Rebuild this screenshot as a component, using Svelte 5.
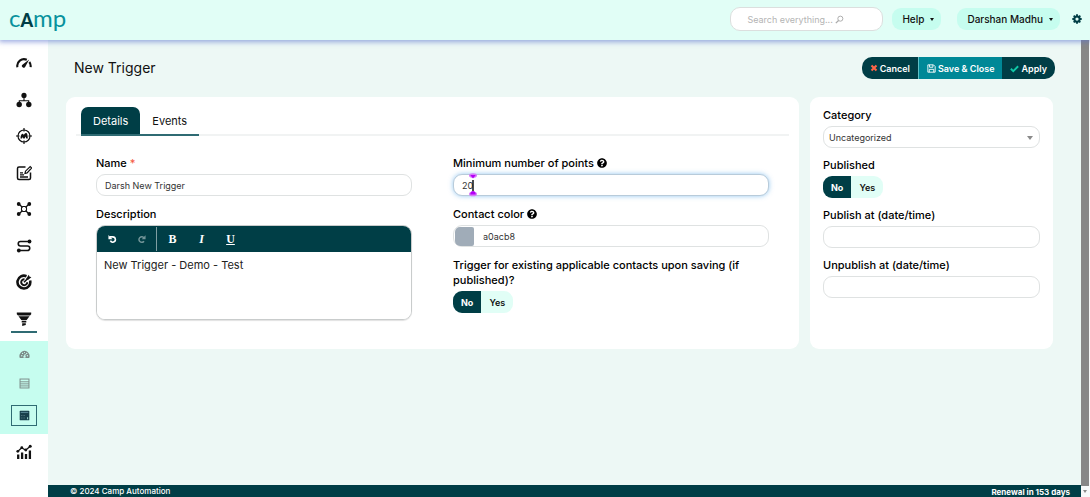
<script>
  const navIcons = ['gauge', 'sitemap', 'segment', 'form', 'network', 'route', 'target', 'funnel'];
  const labels = {
    gauge: 'Dashboard', sitemap: 'Components', segment: 'Segments', form: 'Forms',
    network: 'Channels', route: 'Journeys', target: 'Goals', funnel: 'Points',
    dash: 'Point dashboard', calc: 'Manage actions', calcSolid: 'Manage triggers', chart: 'Reports'
  };
  let name = $state('Darsh New Trigger');
  let points = $state('20');
  let color = $state('a0acb8');
  let description = $state('New Trigger - Demo - Test');
  let existing = $state('no');
  let published = $state('no');
</script>

{#snippet icon(kind)}
  <svg class="icon" viewBox="0 0 16 16" fill="none" stroke="currentColor" stroke-width="1.5" aria-hidden="true">
    {#if kind === 'gauge'}
      <path d="M1.4 12.2a6.7 6.7 0 0 1 9.4-7.4M13.3 7a6.7 6.7 0 0 1 1.3 5.2" stroke-width="2.1" />
      <path d="M13.2 4.5 9.4 11.6a1.8 1.8 0 1 1-2.7-2.2z" fill="currentColor" stroke="none" />
    {:else if kind === 'sitemap'}
      <path d="M8 5v4M3.3 11V8.700h9.400V11" stroke-width="1.1" />
      <g fill="currentColor" stroke="none"><circle cx="8" cy="3.400" r="2.600" /><circle cx="3.200" cy="12.500" r="2.700" /><circle cx="12.800" cy="12.500" r="2.700" /></g>
    {:else if kind === 'segment'}
      <circle cx="8" cy="8" r="6" stroke-width="1.2" />
      <path d="M8 0v3.500M8 12.500v3.500M0 8h3.500M12.500 8h3.500" stroke-width="1.2" />
      <path d="M4.500 10.500c0-3 1-4.700 2.200-4.700.8 0 1 .8 1 1.500C8.200 6 9 5 10 5c1.200 0 1.800 2 1.800 5.500h-1.500l-.8-2-.8 2H7.300l-.6-1.500-.7 1.500z" fill="currentColor" stroke="none" />
    {:else if kind === 'form'}
      <path d="M9.500 2H3a1.500 1.500 0 0 0-1.500 1.500v9.500A1.500 1.500 0 0 0 3 14.500h10a1.500 1.500 0 0 0 1.500-1.500V7.500" />
      <path d="M4 7.800h3M4 9.800h4M4 12h8" stroke-width="1.3" />
      <path d="m9 8.500.5-2.300 4.700-4.700 1.500 1.500-4.600 4.900z" stroke-width="1.2" />
    {:else if kind === 'network'}
      <path d="m3 3 3.500 3.500M13 3 9.500 6.500M3 13l3.500-3.500M13 13 9.500 9.500" stroke-width="1.3" />
      <rect x="5.500" y="5.500" width="5" height="5" rx="1.500" stroke-width="1.1" />
      <g fill="currentColor" stroke="none"><circle cx="2.700" cy="3" r="1.900" /><circle cx="13.300" cy="3" r="1.900" /><circle cx="2.700" cy="13" r="1.900" /><circle cx="13.300" cy="13" r="1.900" /></g>
    {:else if kind === 'route'}
      <path d="M13 3.500H4.500a2.200 2.200 0 0 0 0 4.500h7a2.200 2.200 0 0 1 0 4.500H3" stroke-width="1.6" />
      <g fill="currentColor" stroke="none"><circle cx="13.500" cy="3.500" r="1.900" /><circle cx="2.800" cy="12.500" r="1.900" /></g>
    {:else if kind === 'target'}
      <path d="M10.500 2.200A6.400 6.400 0 1 0 14.100 6.500" stroke-width="2.6" />
      <path d="M8.500 5.200a3 3 0 1 0 2.700 3" stroke-width="2" />
      <path d="m8 8.300 4-4" stroke-width="1.6" />
      <path d="M10.200 4.700 12.800.8l.6 1.800 2 .6-3.500 2.900z" fill="currentColor" stroke="none" />
    {:else if kind === 'funnel'}
      <path d="M.8 1.500h14.400v1.800L14 4.500H2L.8 3.300zM2.500 5.300h11L10.700 9H5.300zM5.700 9.800h4.600v1.700H5.700zM6.200 12.300h3.600V14l-3.600 1z" fill="currentColor" stroke="none" />
    {:else if kind === 'dash'}
      <path d="M1.200 13A7 7 0 0 1 2 6a7 7 0 0 1 12 0 7 7 0 0 1 .8 7z" fill="currentColor" stroke="none" />
      <g fill="#c6fdef" stroke="none"><circle cx="4" cy="9.800" r="1" /><circle cx="5.200" cy="6.400" r="1" /><circle cx="8" cy="5" r=".8" /><circle cx="11.200" cy="6.500" r="1" /><circle cx="12.200" cy="9.800" r="1" /><circle cx="8" cy="11.200" r="1.700" /></g>
      <path d="m8 11 1.200-4" stroke="#c6fdef" />
    {:else if kind === 'calc'}
      <rect x="1.500" y="1.500" width="13" height="13" stroke-width="1.4" />
      <path d="M1.500 5.500h13M1.500 8.500h13M1.500 11.500h13" stroke-width="1.3" />
    {:else if kind === 'calcSolid'}
      <rect x="1" y="1" width="14" height="14" rx="1" fill="currentColor" stroke="none" />
      <path d="M2.500 3.500h11" stroke="#5a8796" stroke-width="1.5" />
      <path d="M3 8h7M3 11.500h7" stroke="#4d6f7a" stroke-width="1.5" stroke-dasharray="2 1.500" />
      <path d="M12.500 10.500v3" stroke="#9fd6d0" stroke-width="1.5" />
    {:else if kind === 'chart'}
      <path d="M2.200 15v-4.500M6.100 15V8.500M10 15v-5M13.900 15V6.500" stroke-width="2.3" />
      <path d="m1.700 7.500 4-3.800 4 2.500 4.500-4" stroke-width="1.2" />
      <g fill="currentColor" stroke="none"><circle cx="1.800" cy="7.300" r="1.400" /><circle cx="5.800" cy="3.700" r="1.400" /><circle cx="9.800" cy="6" r="1.400" /><circle cx="14.200" cy="2.200" r="1.500" /></g>
    {:else if kind === 'search'}
      <circle cx="9.500" cy="6.500" r="4.500" stroke-width="1.7" /><path d="m6.300 9.700-4.800 4.800" stroke-width="2.2" />
    {:else if kind === 'gear'}
      <circle cx="8" cy="8" r="4.200" stroke-width="3.2" />
      <path d="M8 .5v3M8 12.500v3M.5 8h3M12.500 8h3M2.700 2.700l2 2M11.300 11.300l2 2M13.300 2.700l-2 2M4.700 11.300l-2 2" stroke-width="3" />
    {:else if kind === 'times'}
      <path d="m3 3 10 10M13 3 3 13" stroke-width="4.2" />
    {:else if kind === 'save'}
      <path d="M1.500 1.500h10l3 3v10h-13zM4.500 1.500v4.300h6V1.500M4 14.500V9.500h8v5" stroke-width="1.6" />
    {:else if kind === 'check'}
      <path d="m1.500 8.500 4.300 4.300L14.500 4" stroke-width="3.4" />
    {:else if kind === 'undo'}
      <path d="M3 3.300h5.500a4.700 4.700 0 1 1-4.300 6.700" stroke-width="2.8" /><path d="M.8 0v7.500h7.200z" fill="currentColor" stroke="none" />
    {:else if kind === 'redo'}
      <path d="M12.500 5A5 5 0 1 0 12.500 11" stroke-width="2.6" /><path d="M15.200.5v7H8.300z" fill="currentColor" stroke="none" />
    {/if}
  </svg>
{/snippet}

{#snippet help()}
  <svg class="help" viewBox="0 0 512 512" fill="currentColor" aria-hidden="true"><path d="M504 256c0 136.997-111.043 248-248 248S8 392.997 8 256C8 119.083 119.043 8 256 8s248 111.083 248 248zM262.655 90c-54.497 0-89.255 22.957-116.549 63.758-3.536 5.286-2.353 12.415 2.715 16.258l34.699 26.310c5.205 3.947 12.621 3.008 16.665-2.122 17.864-22.658 30.113-35.797 57.303-35.797 20.429 0 45.698 13.148 45.698 32.958 0 14.976-12.363 22.667-32.534 33.976C247.128 238.528 216 254.941 216 296v4c0 6.627 5.373 12 12 12h56c6.627 0 12-5.373 12-12v-1.333c0-28.462 83.186-29.647 83.186-106.667 0-58.002-60.165-102-116.531-102zM256 338c-25.365 0-46 20.635-46 46 0 25.364 20.635 46 46 46s46-20.636 46-46c0-25.364-20.635-46-46-46z" /></svg>
{/snippet}

{#snippet toggle(group, get, set)}
  <div class="toggle">
    {#each [['no', 'No'], ['yes', 'Yes']] as [value, text]}
      <label class:on={get() === value}>
        <input type="radio" name={group} {value} checked={get() === value} onchange={() => set(value)} />{text}
      </label>
    {/each}
  </div>
{/snippet}

<div class="page">
  <header>
    <a class="logo" href="#home">c<b>A</b>mp</a>
    <div class="search">
      <input type="text" placeholder="Search everything..." aria-label="Search everything" />
      {@render icon('search')}
    </div>
    <button class="pill">Help <span class="caret"></span></button>
    <button class="pill user">Darshan Madhu <span class="caret"></span></button>
    <button class="settings" aria-label="Settings">{@render icon('gear')}</button>
  </header>

  <div class="body">
    <nav>
      <div class="primary">
        {#each navIcons as kind}
          <a href="#{kind}" aria-label={labels[kind]} class:current={kind === 'funnel'}>{@render icon(kind)}</a>
        {/each}
      </div>
      <div class="submenu">
        {#each ['dash', 'calc', 'calcSolid'] as kind}
          <a href="#{kind}" aria-label={labels[kind]} class:active={kind === 'calcSolid'}>{@render icon(kind)}</a>
        {/each}
      </div>
      <a class="chart" href="#chart" aria-label={labels.chart}>{@render icon('chart')}</a>
    </nav>

    <div class="content">
      <main>
        <div class="title">
          <h1>New Trigger</h1>
          <div class="actions">
            <button class="cancel">{@render icon('times')}Cancel</button>
            <button class="save">{@render icon('save')}Save &amp; Close</button>
            <button class="apply">{@render icon('check')}Apply</button>
          </div>
        </div>

        <div class="panels">
          <section class="card details">
            <div class="tabs" role="tablist">
              <button role="tab" aria-selected="true">Details</button>
              <button role="tab" aria-selected="false">Events</button>
            </div>
            <div class="columns">
              <div class="column">
                <div class="field">
                  <label for="name">Name <span class="required">*</span></label>
                  <input id="name" type="text" bind:value={name} />
                </div>
                <div class="field">
                  <label for="description">Description</label>
                  <div class="editor">
                    <div class="toolbar">
                      <button aria-label="Undo">{@render icon('undo')}</button>
                      <button class="off" aria-label="Redo">{@render icon('redo')}</button>
                      <span class="divider"></span>
                      <button class="glyph">B</button>
                      <button class="glyph italic">I</button>
                      <button class="glyph underline">U</button>
                    </div>
                    <textarea id="description" bind:value={description}></textarea>
                  </div>
                </div>
              </div>
              <div class="column">
                <div class="field">
                  <label for="points">Minimum number of points {@render help()}</label>
                  <div class="points">
                    <input id="points" type="text" inputmode="numeric" bind:value={points} />
                    <svg class="cursor" viewBox="0 0 8 24" aria-hidden="true">
                      <path d="M4 7v11" stroke="#111" stroke-width="1.5" />
                      <ellipse cx="4" cy="2.500" rx="4" ry="2.300" fill="#d77bfa" /><path d="M1.300 2h5.400L4 5.500z" fill="#b400f5" />
                      <ellipse cx="4" cy="21" rx="4" ry="2.300" fill="#d77bfa" /><path d="M1.300 21.500a2.700 3.500 0 0 1 5.400 0z" fill="#b400f5" />
                    </svg>
                  </div>
                </div>
                <div class="field">
                  <label for="color">Contact color {@render help()}</label>
                  <div class="color">
                    <span class="swatch" style="background: #{color}"></span>
                    <input id="color" type="text" bind:value={color} />
                  </div>
                </div>
                <div class="field">
                  <span class="label">Trigger for existing applicable contacts upon saving (if published)?</span>
                  {@render toggle('existing', () => existing, (v) => (existing = v))}
                </div>
              </div>
            </div>
          </section>

          <aside class="card">
            <div class="field">
              <label for="category">Category</label>
              <div class="select">
                <select id="category"><option>Uncategorized</option></select>
                <span class="arrow"></span>
              </div>
            </div>
            <div class="field">
              <span class="label">Published</span>
              {@render toggle('published', () => published, (v) => (published = v))}
            </div>
            <div class="field">
              <label for="from">Publish at (date/time)</label>
              <input id="from" type="text" />
            </div>
            <div class="field">
              <label for="until">Unpublish at (date/time)</label>
              <input id="until" type="text" />
            </div>
          </aside>
        </div>
      </main>
      <footer><span>© 2024 Camp Automation</span><span class="renewal">Renewal in 153 days</span></footer>
    </div>
    <div class="scrollbar"><span class="thumb"></span><span class="arrow"></span></div>
  </div>
</div>

<style>
  :global(body) { margin: 0; }
  .page, .page * { box-sizing: border-box; }
  .page {
    display: flex; flex-direction: column; height: 100vh; min-height: 480px;
    font-family: Inter, "Liberation Sans", sans-serif; font-size: 9px; color: #111;
    background: #edf8f5; overflow: hidden;
  }
  button, input, select, textarea { font: inherit; color: inherit; margin: 0; }
  button { border: 0; padding: 0; background: none; cursor: pointer; }
  a { color: inherit; text-decoration: none; }
  .icon { width: 16px; height: 16px; display: block; flex: none; }

  header {
    display: flex; align-items: center; flex: none; height: 40px; padding: 0 8px 2px 9px;
    background: #e1fef6; box-shadow: 0 1px 5px 1px rgba(90, 115, 205, .6); position: relative; z-index: 1;
  }
  .logo { font: 24px/24px Lato, sans-serif; color: #08929d; margin-right: auto; }
  .logo b { color: #003e46; font-size: 18px; font-weight: 900; }
  .search {
    display: flex; align-items: center; width: 153px; height: 24px; padding: 0 16px;
    background: #fff; border: 1px solid #dcdfde; border-radius: 10px; color: #aaa;
  }
  .search input { width: 88px; border: 0; padding: 0; background: none; outline: 0; }
  .search input::placeholder { color: #b4b4b4; opacity: 1; }
  .search .icon { width: 9px; height: 9px; }
  .pill {
    display: flex; align-items: center; justify-content: space-between; gap: 6px; height: 22px; padding: 0 7px 0 10px; margin-left: 9px;
    background: #c6fdef; border-radius: 9px; font-size: 10px; font-weight: 500;
  }
  .pill.user { margin: 0 12px 0 16px; }
  .caret { border: 2px solid transparent; border-top: 3px solid #111; border-bottom: 0; }
  .settings { color: #003e46; }
  .settings .icon { width: 10px; height: 10px; }

  .body { display: flex; flex: 1; min-height: 0; }
  nav { width: 48px; flex: none; background: #fff; padding-top: 5px; color: #111; }
  nav a { display: flex; align-items: center; justify-content: center; }
  .primary { display: grid; grid-auto-rows: 1fr; height: 292px; }
  .primary .current { margin: 0 11px 4px; border-bottom: 2px solid #2f6b73; padding-top: 6px; }
  .submenu { display: grid; gap: 8px; margin-top: 4px; padding: 3px 11px 8px; background: #c6fdef; color: #7b8b88; }
  .submenu a { height: 21px; }
  .submenu .icon { width: 11px; height: 11px; }
  .submenu .active { color: #173f4b; border: 1px solid #2f6b73; margin-top: 3px; }
  .chart { height: 36px; }

  .content { display: flex; flex-direction: column; flex: 1; min-width: 0; }
  main { flex: 1; padding: 17px 28px 0 18px; }
  .title { display: flex; align-items: center; justify-content: space-between; padding-left: 8px; }
  h1 { margin: 0; font-size: 14px; line-height: 22px; font-weight: 400; }
  .actions { display: flex; border-radius: 10px; overflow: hidden; margin-right: -2px; }
  .actions button {
    display: flex; align-items: center; gap: 2px; height: 22px; padding: 0 8px;
    background: #003e46; color: #fff; font-weight: 600;
  }
  .actions .icon { width: 9px; height: 9px; }
  .actions .save { background: #008897; border-left: 1px solid #5fc0c6; }
  .actions .cancel .icon { color: #ff6548; width: 8px; height: 8px; }
  .apply .icon { color: #10c7a6; }

  .panels { display: grid; grid-template-columns: minmax(0, 1fr) 243px; gap: 11px; margin-top: 18px; }
  .card { background: #fff; border-radius: 9px; }
  .details { padding: 10px 10px 29px; }
  .tabs { display: flex; padding-left: 5px; border-bottom: 2px solid #f1f3f3; }
  .tabs button { height: 29px; padding: 0 12px; margin-bottom: -2px; font-size: 11px; border-bottom: 2px solid #2f6b73; }
  .tabs [aria-selected="true"] { background: #003e46; color: #fff; border-radius: 7px 7px 0 0; }
  .columns { display: grid; grid-template-columns: 1fr 1fr; gap: 41px; padding: 20px 20px 0 20px; }
  .column, aside { display: flex; flex-direction: column; gap: 11px; min-width: 0; }
  aside { gap: 10px; padding: 11px 13px; }
  .field { display: flex; flex-direction: column; gap: 3px; }
  .field > label, .label { font-size: 11px; line-height: 15px; font-weight: 500; color: #000; }
  .required { color: #f55a45; }
  .help { width: 10px; height: 10px; vertical-align: -1px; }
  .field input[type="text"], .color, select {
    width: 100%; height: 22px; padding: 0 8px; background: #fff; border: 1px solid #dfe2e2; border-radius: 9px; color: #333; outline: 0;
  }
  .points, .select { position: relative; display: flex; }
  .points input[type="text"] { border-color: #b8cbda; box-shadow: 0 0 5px rgba(102, 175, 233, .7); }
  .cursor { position: absolute; left: 16px; top: -1px; width: 8px; height: 24px; }
  .color { display: flex; align-items: center; gap: 9px; padding: 0 1px; }
  .color input[type="text"] { border: 0; height: 20px; padding: 0; }
  .swatch { width: 19px; height: 19px; flex: none; border-radius: 5px 2px 2px 5px; }
  select { appearance: none; padding: 0 5px; }
  .arrow { border: 3px solid transparent; border-top: 4px solid #8a8a8a; border-bottom: 0; }
  .select .arrow { position: absolute; right: 7px; top: 10px; pointer-events: none; }

  .editor { border: 1px solid #c9cccc; border-radius: 9px; overflow: hidden; box-shadow: 0 1px 1px rgba(0, 0, 0, .12); }
  .toolbar { display: flex; align-items: center; height: 26px; padding-left: 1px; background: #003e46; color: #fff; }
  .toolbar button { display: flex; align-items: center; justify-content: center; width: 29px; height: 26px; }
  .toolbar .icon { width: 9px; height: 9px; }
  .off { opacity: .45; }
  .divider { width: 1px; height: 24px; background: #7f9fa3; margin-right: 1px; }
  .toolbar .glyph { font: 700 12px "Liberation Serif", serif; }
  .toolbar .italic { font-style: italic; }
  .toolbar .underline { text-decoration: underline; }
  textarea { display: block; width: 100%; height: 67px; padding: 5px 7px; border: 0; outline: 0; resize: none; font-size: 11px; line-height: 17px; color: #222; }

  .toggle { display: flex; align-self: flex-start; border-radius: 9px; overflow: hidden; background: #e1fef6; }
  .toggle label { display: flex; align-items: center; height: 22px; padding: 0 8px; font-weight: 600; }
  .toggle .on { background: #003e46; color: #fff; font-weight: 700; }
  .toggle input { appearance: none; width: 0; height: 0; margin: 0; }

  footer {
    display: flex; justify-content: space-between; flex: none; height: 12px; padding: 0 11px 0 22px;
    background: #003e46; color: #fff; font-size: 8px; font-weight: 500; line-height: 12px; overflow: hidden;
  }
  .renewal { font-weight: 700; line-height: 15px; }
  .scrollbar { display: flex; flex-direction: column; align-items: center; gap: 4px; width: 9px; padding: 0 1px 4px 0; background: #f7f9f9; }
  .thumb { flex: 1; width: 100%; background: #878787; }
  .scrollbar .arrow { border-width: 3px 2px 0; }
</style>
